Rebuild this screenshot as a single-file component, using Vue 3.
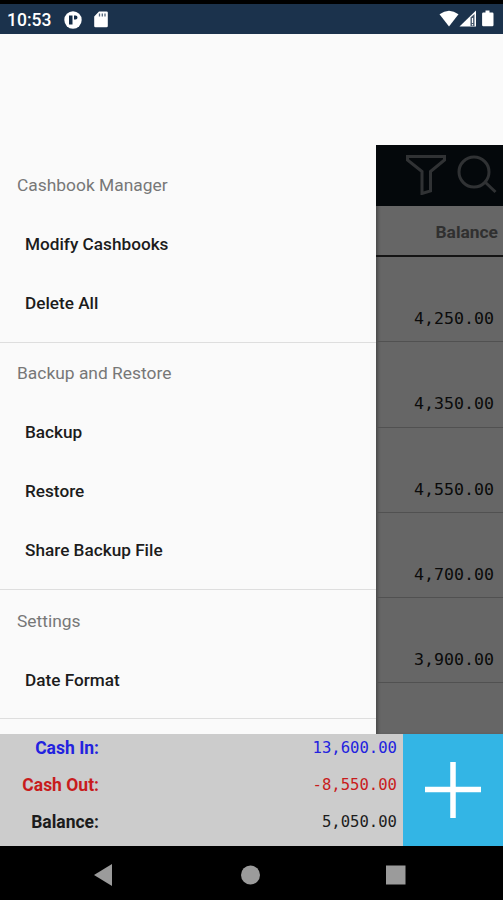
<script setup>
const groups = [
  { title: 'Cashbook Manager', items: ['Modify Cashbooks', 'Delete All'] },
  { title: 'Backup and Restore', items: ['Backup', 'Restore', 'Share Backup File'] },
  { title: 'Settings', items: ['Date Format'] },
]
const balances = ['4,250.00', '4,350.00', '4,550.00', '4,700.00', '3,900.00']
const totals = [
  { label: 'Cash In:', value: '13,600.00', kind: 'in' },
  { label: 'Cash Out:', value: '-8,550.00', kind: 'out' },
  { label: 'Balance:', value: '5,050.00', kind: 'net' },
]
</script>

<template>
  <div class="screen">
    <header class="status">
      <span class="time">10:53</span>
      <svg class="app-icon" width="18" height="18" viewBox="0 0 18 18">
        <circle cx="9" cy="9" r="8.700" fill="#fff" />
        <path d="M5 4.500h3.500v9H5zM10 4.500h1.500a2 2 0 0 1 0 4H10z" fill="#142c46" />
      </svg>
      <svg class="card-icon" width="14" height="17" viewBox="0 0 14 17">
        <path d="M5 .5h7.500A1.300 1.300 0 0 1 13.800 2v13a1.300 1.300 0 0 1-1.300 1.300h-11A1.300 1.300 0 0 1 .2 15V5.500z" fill="#fff" />
        <path d="M5.500 2.500v3M8.300 2.500v3M11 2.500v3" stroke="#52657b" stroke-width="1.300" />
      </svg>
      <svg class="signals" width="60" height="20" viewBox="0 0 60 20">
        <path d="M.5 5.300Q10 -1.700 19.500 5.300L10 17.500z" fill="#fff" />
        <path d="M20.500 17.500 37 1.500v16z" fill="#fff" />
        <path d="M31.500 8.500 35.500 5v12h-4z" fill="#47596e" />
        <path d="M33.500 9v5M33.500 15v1.500" stroke="#fff" stroke-width="1.200" />
        <path d="M46.500 1.500h4v2h2.800a1.200 1.200 0 0 1 1.200 1.200v11.300a1.300 1.300 0 0 1-1.200 1.300h-9a1.300 1.300 0 0 1-1.200-1.300v-11.300A1.200 1.200 0 0 1 44.300 3.500h2.200z" fill="#fff" />
      </svg>
    </header>

    <main class="body">
      <nav class="drawer">
        <section v-for="g in groups" :key="g.title" class="group">
          <h2>{{ g.title }}</h2>
          <a v-for="i in g.items" :key="i">{{ i }}</a>
        </section>
      </nav>
      <div class="ledger">
        <div class="toolbar">
          <svg width="40" height="40" viewBox="0 0 40 40">
            <path d="M1.500 1.500H38.500V5L24.500 16.500V36L16 38.500V16.500L1.500 5Z" />
          </svg>
          <svg width="40" height="40" viewBox="0 0 40 40">
            <circle cx="17" cy="17" r="15" />
            <path d="M28 27 38.500 37" />
          </svg>
        </div>
        <div class="heading">Balance</div>
        <div v-for="b in balances" :key="b" class="entry">{{ b }}</div>
      </div>
    </main>

    <footer class="summary">
      <div class="totals">
        <div v-for="t in totals" :key="t.label" class="total" :class="t.kind">
          <b>{{ t.label }}</b><span>{{ t.value }}</span>
        </div>
      </div>
      <button class="add" aria-label="Add">
        <svg width="58" height="58" viewBox="0 0 58 58">
          <path d="M29 1v56M1 28.500h56" stroke="#fff" stroke-width="5.500" />
        </svg>
      </button>
    </footer>

    <div class="navbar">
      <svg width="503" height="54" viewBox="0 0 503 54" fill="#9b9b9b">
        <path d="M94 29 112 18v22z" />
        <circle cx="250.500" cy="29" r="9.500" />
        <rect x="386" y="19.500" width="19.500" height="19" />
      </svg>
    </div>
  </div>
</template>

<style>
body { margin: 0; background: #000; }
</style>

<style scoped>
.screen {
  width: 503px;
  height: 900px;
  display: flex;
  flex-direction: column;
  overflow: hidden;
  background: #fafafa;
  font-family: Roboto, sans-serif;
}
.status {
  box-sizing: border-box;
  height: 34px;
  flex: none;
  border-top: 4px solid #000;
  background: #1b324c;
  display: flex;
  align-items: center;
  padding: 0 4px 0 7px;
  color: #fff;
}
.time { width: 57px; font-size: 17.500px; font-weight: 500; line-height: 30px; padding-top: 2px; white-space: nowrap; }
.app-icon { margin-top: 1px; }
.card-icon { margin-left: 12px; }
.signals { margin-left: auto; }
.body { height: 700px; flex: none; display: flex; overflow: hidden; }
.drawer { width: 376px; flex: none; box-sizing: border-box; padding-top: 121px; background: #fafafa; }
.group { box-sizing: border-box; border-bottom: 1px solid #dedede; height: 188px; padding-top: 1px; }
.group:nth-child(2) { height: 247px; }
.group:nth-child(3) { height: 129px; padding-top: 2px; }
.group h2, .group a { display: block; margin: 0; height: 59px; line-height: 59px; font-size: 17.200px; font-weight: 500; white-space: nowrap; }
.group h2 { padding-left: 17px; color: #777; font-size: 17.400px; font-weight: 400; }
.group a { padding-left: 25px; color: #1c1c1c; }
.ledger { flex: 1; margin-top: 111px; background: #666; box-shadow: inset 3px 0 3px -1px #4b4b4b; }
.toolbar {
  box-sizing: border-box;
  height: 61px;
  background: #04080b;
  padding: 10px 6px 0 0;
  display: flex;
  justify-content: flex-end;
  gap: 11px;
}
.toolbar svg { fill: none; stroke: #303234; stroke-width: 3; }
.heading {
  box-sizing: border-box;
  height: 51px;
  border-bottom: 2px solid #141414;
  padding-right: 5px;
  line-height: 52px;
  text-align: right;
  font-size: 17.400px;
  font-weight: 700;
  color: #303030;
}
.entry {
  box-sizing: border-box;
  height: 85.300px;
  border-bottom: 1px solid #515151;
  padding: 47px 9px 0 0;
  text-align: right;
  font: 16.600px/30px "DejaVu Sans Mono", monospace;
  color: #0b0b0b;
}
.summary { height: 112px; flex: none; display: flex; background: #ccc; }
.totals { flex: 1; }
.total { display: flex; height: 37px; line-height: 28px; padding-right: 6px; }
.total b { width: 99px; text-align: right; font-size: 17.500px; font-weight: 700; }
.total span { flex: 1; text-align: right; font: 15.600px/29px "DejaVu Sans Mono", monospace; }
.in { color: #2222df; }
.out { color: #c81c1c; }
.net { color: #1c1c1c; }
.add { width: 100px; border: 0; padding: 0; background: #33b5e5; display: flex; align-items: center; justify-content: center; }
.navbar { height: 54px; background: #000; }
.navbar svg { display: block; }
</style>
